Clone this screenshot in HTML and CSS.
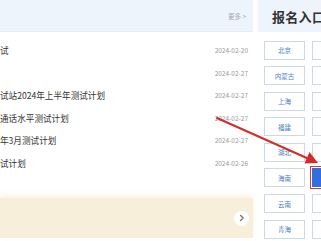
FILE: index.html
```html
<!DOCTYPE html>
<html lang="zh">
<head>
<meta charset="utf-8">
<link rel="stylesheet" href="styles.css">
</head>
<body>
<div class="page">
  <section class="news">
    <div class="news-head"><span class="more">更多 &gt;</span></div>
    <ul class="list">
      <li><span class="title">试</span><span class="date">2024-02-20</span></li>
      <li><span class="title"></span><span class="date">2024-02-27</span></li>
      <li><span class="title">试站2024年上半年测试计划</span><span class="date">2024-02-27</span></li>
      <li><span class="title">通话水平测试计划</span><span class="date">2024-02-27</span></li>
      <li><span class="title">年3月测试计划</span><span class="date">2024-02-27</span></li>
      <li><span class="title">试计划</span><span class="date">2024-02-26</span></li>
    </ul>
    <div class="banner">
      <span class="go"><svg width="8" height="8" viewBox="0 0 8 8"><path d="M2.6 1.4 L5.2 4 L2.6 6.6" fill="none" stroke="#8a7560" stroke-width="1.4" stroke-linecap="round" stroke-linejoin="round"/></svg></span>
    </div>
  </section>
  <section class="entry">
    <div class="entry-head">报名入口</div>
    <div class="cities">
      <span class="city">北京</span><span class="city">天津</span>
      <span class="city">内蒙古</span><span class="city">辽宁</span>
      <span class="city">上海</span><span class="city">江苏</span>
      <span class="city">福建</span><span class="city">江西</span>
      <span class="city">湖北</span><span class="city">湖南</span>
      <span class="city">海南</span><span class="city active">重庆</span>
      <span class="city">云南</span><span class="city">西藏</span>
      <span class="city">青海</span><span class="city">宁夏</span>
    </div>
  </section>
</div>
<svg class="arrow" width="321" height="241" viewBox="0 0 321 241">
  <line x1="217" y1="118" x2="309" y2="159" stroke="#d42b2b" stroke-width="2" stroke-linecap="round"/>
  <polygon points="318,163 304.5,163.5 309.5,152" fill="#d42b2b"/>
</svg>
</body>
</html>
```

FILE: styles.css
```css
html, body {
  margin: 0;
  padding: 0;
  background: #ffffff;
  overflow: hidden;
  width: 321px;
  height: 241px;
  font-family: "Noto Sans CJK SC", "Noto Sans", sans-serif;
}
.page {
  display: flex;
  gap: 5px;
  width: 420px;
}
.news {
  width: 253px;
  flex: none;
  display: flex;
  flex-direction: column;
}
.news-head {
  height: 32px;
  background: #eef4fc;
  border-bottom: 1px solid #e6edf7;
  box-sizing: border-box;
  display: flex;
  align-items: center;
  justify-content: flex-end;
  padding-right: 7px;
}
.more {
  font-size: 6.5px;
  color: #a3a9b3;
}
.list {
  list-style: none;
  margin: 0;
  padding: 7px 0 0 0;
}
.list li {
  height: 22.5px;
  display: flex;
  align-items: center;
  justify-content: space-between;
  padding-right: 5px;
}
.title {
  font-size: 8.6px;
  color: #333;
  white-space: nowrap;
}
.date {
  font-size: 6.5px;
  color: #9a9a9a;
}
.banner {
  margin-top: 24px;
  height: 40px;
  background: #f8efda;
  box-shadow: 0 -3px 5px rgba(250, 236, 200, 0.5);
  display: flex;
  align-items: center;
  justify-content: flex-end;
  padding-right: 4px;
}
.go {
  width: 15px;
  height: 15px;
  border-radius: 50%;
  background: #fff;
  display: flex;
  align-items: center;
  justify-content: center;
}
.entry {
  width: 160px;
  flex: none;
}
.entry-head {
  height: 32px;
  background: #eef4fc;
  display: flex;
  align-items: center;
  padding-left: 14px;
  font-size: 13px;
  font-weight: bold;
  color: #333;
  letter-spacing: 0.3px;
}
.cities {
  display: grid;
  grid-template-columns: 41px 41px;
  grid-auto-rows: 19px;
  column-gap: 7px;
  row-gap: 6.6px;
  padding: 8.5px 0 0 6px;
}
.city {
  border: 1px solid #cdd8e6;
  background: #fff;
  display: flex;
  align-items: center;
  justify-content: center;
  font-size: 6.5px;
  color: #4c7fc0;
}
.city.active {
  background: #2f6fe0;
  border-color: #2f6fe0;
  color: #fff;
  outline: 1.5px solid #d43a3a;
  outline-offset: 1px;
}
.arrow {
  position: absolute;
  left: 0;
  top: 0;
  pointer-events: none;
}
```
